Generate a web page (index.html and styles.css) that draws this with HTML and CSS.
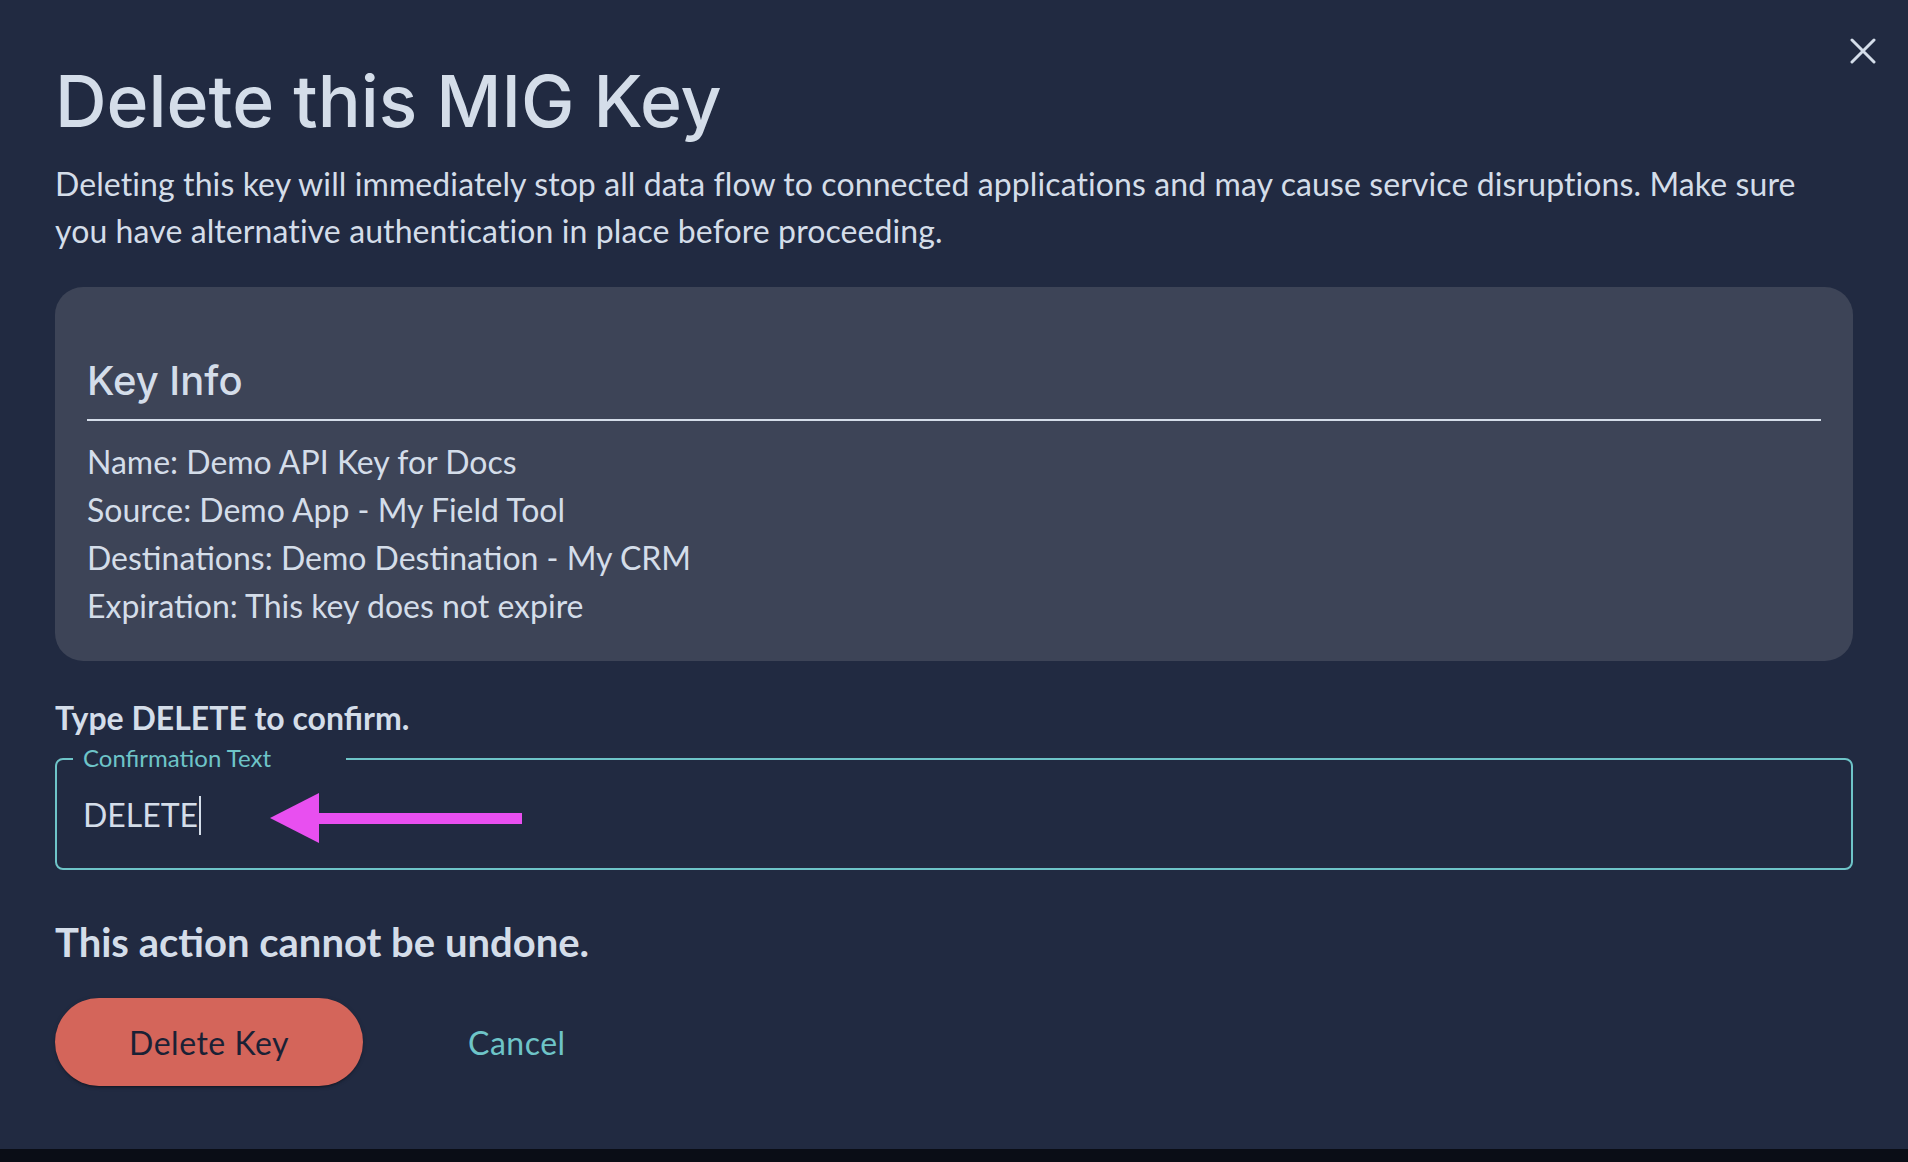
FILE: index.html
```html
<!DOCTYPE html>
<html lang="en">
<head>
<meta charset="utf-8">
<title>Delete this MIG Key</title>
<link rel="stylesheet" href="styles.css">
</head>
<body>
<div class="modal">
  <button class="close" aria-label="Close">
    <svg width="26" height="26" viewBox="0 0 26 26"><path d="M2 2 L24 24 M24 2 L2 24" stroke="#d4dde9" stroke-width="3" stroke-linecap="round" fill="none"/></svg>
  </button>
  <h1 class="title">Delete this MIG Key</h1>
  <p class="lead">Deleting this key will immediately stop all data flow to connected applications and may cause service disruptions. Make sure you have alternative authentication in place before proceeding.</p>
  <section class="card">
    <h2 class="card-title">Key Info</h2>
    <div class="info">
      <div>Name: Demo API Key for Docs</div>
      <div>Source: Demo App - My Field Tool</div>
      <div>Destinations: Demo Destination - My CRM</div>
      <div>Expiration: This key does not expire</div>
    </div>
  </section>
  <div class="confirm-label">Type DELETE to confirm.</div>
  <div class="field">
    <span class="field-label">Confirmation Text</span>
    <div class="field-value">DELETE<span class="caret"></span></div>
    <svg class="arrow" width="256" height="56" viewBox="0 0 256 56"><polygon points="2,28 51,3 51,53" fill="#e84ff0"/><rect x="50" y="23" width="204" height="11" fill="#e84ff0"/></svg>
  </div>
  <div class="warning">This action cannot be undone.</div>
  <div class="actions">
    <button class="btn-delete">Delete Key</button>
    <button class="btn-cancel">Cancel</button>
  </div>
</div>
</body>
</html>
```

FILE: styles.css
```css
html, body {
  margin: 0;
  padding: 0;
}
body {
  background: #0a0d16;
  font-family: "Lato", "Liberation Sans", sans-serif;
  color: #d4dde9;
}
.modal {
  position: relative;
  height: 1149px;
  box-sizing: border-box;
  background: #212a41;
  padding: 59px 55px 0 55px;
}
.close {
  position: absolute;
  top: 38px;
  right: 32px;
  width: 26px;
  height: 26px;
  padding: 0;
  border: 0;
  background: transparent;
  display: flex;
}
.title {
  margin: 0;
  font-family: "Inter", "Noto Sans", sans-serif;
  font-weight: 500;
  font-size: 71.5px;
  line-height: 84px;
  letter-spacing: 0;
  color: #d4dde9;
}
.lead {
  margin: 17px 0 0 0;
  padding-right: 40px;
  font-size: 32px;
  line-height: 47px;
  letter-spacing: 0.1px;
}
.card {
  margin-top: 33px;
  background: #3d4457;
  border-radius: 28px;
  padding: 70px 32px 31px 32px;
}
.card-title {
  margin: 0;
  font-family: "Inter", "Noto Sans", sans-serif;
  font-weight: 500;
  font-size: 40px;
  line-height: 48px;
  padding-bottom: 14px;
  border-bottom: 2px solid #d4dde9;
}
.info {
  margin-top: 17px;
  font-size: 32px;
  line-height: 48px;
}
.confirm-label {
  margin-top: 39px;
  font-weight: 700;
  font-size: 32px;
  line-height: 36px;
}
.field {
  position: relative;
  margin-top: 22px;
  height: 112px;
  box-sizing: border-box;
  border: 2px solid #6ec4c8;
  border-radius: 8px;
  display: flex;
  align-items: center;
  padding: 0 26px;
}
.field-label {
  position: absolute;
  left: 16px;
  top: -16px;
  width: 273px;
  box-sizing: border-box;
  padding-left: 10px;
  background: #212a41;
  color: #6ec4c8;
  font-size: 24px;
  line-height: 28px;
}
.field-value {
  font-size: 32px;
  line-height: 38px;
  display: flex;
  align-items: center;
  padding-top: 2px;
}
.caret {
  display: inline-block;
  width: 2px;
  height: 39px;
  background: #d4dde9;
  margin-left: 1px;
}
.arrow {
  position: absolute;
  left: 211px;
  top: 30px;
}
.warning {
  margin-top: 48px;
  font-weight: 700;
  font-size: 40px;
  line-height: 48px;
}
.actions {
  margin-top: 32px;
  display: flex;
  align-items: center;
  gap: 81px;
}
.btn-delete {
  height: 88px;
  width: 308px;
  border: 0;
  border-radius: 44px;
  background: #d4655a;
  color: #1a2135;
  font-family: "Lato", "Liberation Sans", sans-serif;
  font-size: 32px;
  letter-spacing: 0.5px;
  box-shadow: 0 3px 1px -2px rgba(0,0,0,0.2), 0 2px 2px 0 rgba(0,0,0,0.14), 0 1px 5px 0 rgba(0,0,0,0.12);
  padding: 0;
}
.btn-cancel {
  height: 88px;
  border: 0;
  background: transparent;
  color: #6ec4c8;
  font-family: "Lato", "Liberation Sans", sans-serif;
  font-size: 32px;
  letter-spacing: 0.5px;
  padding: 0 24px;
}
```
